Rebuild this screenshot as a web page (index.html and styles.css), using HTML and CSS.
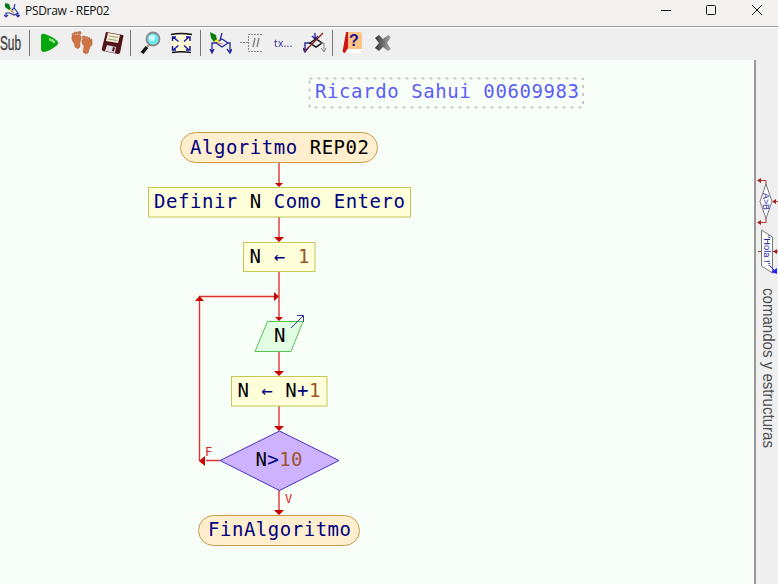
FILE: index.html
```html
<!DOCTYPE html>
<html lang="es">
<head>
<meta charset="utf-8">
<title>PSDraw - REP02</title>
<link rel="stylesheet" href="styles.css">
</head>
<body>
<div class="window">
  <header class="titlebar">
    <svg class="app-icon" width="16" height="16" viewBox="0 0 16 16">
      <path d="M7 8 10 5l4 5-4 2-4-2H2v4M10 5l1-4M14 10v3M0 12l2 2 2-2M12 12l2 2 2-2" fill="none" stroke="#3038a8" stroke-width="1.2"/>
      <path d="M6 7l4 3" stroke="#c44" stroke-width="1"/>
      <path d="M1 0l4 1 2 5-2 1L1 4z" fill="#087818"/><path d="M5 7l2-1 1 3z" fill="#fe0"/>
    </svg>
    <span class="title">PSDraw - REP02</span>
    <div class="controls">
      <svg width="112" height="20" viewBox="0 0 112 20" fill="none" stroke="#111" stroke-width="1">
        <path d="M5 10.500h10"/><rect x="50.500" y="5.500" width="9" height="9" rx="1"/><path d="M96 5l10 10M106 5l-10 10"/>
      </svg>
    </div>
  </header>
  <nav class="toolbar">
    <svg class="sub" width="23" height="30"><text x="0" y="22" textLength="21" lengthAdjust="spacingAndGlyphs">Sub</text></svg>
    <i class="sep"></i>
    <svg class="play" width="20" height="22" viewBox="0 0 20 22"><path d="M1 3Q2 1 5 2q9 3 13 8 1 2-2 4-6 5-12 6-3 0-3-3z" fill="#08a60c"/><path d="M10 7.500q3 1 4 2.500" stroke="#80e878" stroke-width="2.500" fill="none" stroke-linecap="round"/></svg>
    <svg class="feet" width="22" height="24" viewBox="0 0 22 24" fill="#ce7543" stroke="#a9562d" stroke-width=".4"><path d="M1 5q4-3 9 0 1 3-1 6l0 5q-2 3-5 0L3 12Q0 9 1 5z"/><circle cx="1.800" cy="3.500" r=".9"/><circle cx="3.600" cy="2.200" r="1"/><circle cx="5.600" cy="1.700" r="1"/><circle cx="8.500" cy="2" r="1.700"/><path d="M11 9q5-3 10 1 1 4-2 6l-2 6q-3 2-5-1l1-6q-3-3-2-6z"/><circle cx="13" cy="6.500" r="1.700"/><circle cx="16" cy="6.500" r="1"/><circle cx="18.200" cy="7.500" r="1"/><circle cx="20.300" cy="9" r=".9"/></svg>
    <svg class="disk" width="24" height="24" viewBox="0 0 24 24"><path d="M5 1l17 3q1 1 0 3l-3 15q-1 1-2 1L2 20q-2-1-1-3z" fill="#541318"/><path d="M7 2l12 2-2 8-12-2z" fill="#f5f2d5"/><path d="M8 5l9 1.500M7 8l9 1.500" stroke="#9c9a84"/><path d="M6 14l9 2-1 6-10-2z" fill="#dedee2"/><path d="M12 16l2 .5-1 4-2-.5z" fill="#541318"/></svg>
    <i class="sep s2"></i>
    <svg class="lens" width="22" height="24" viewBox="0 0 22 24"><path d="M7 16l-5 6" stroke="#111" stroke-width="3.500"/><path d="M10 13l-3 3" stroke="#999" stroke-width="2"/><circle cx="13" cy="8" r="6.500" fill="#6ce8f5" stroke="#888" stroke-width="1.800"/><circle cx="12" cy="7" r="3" fill="#d0ffff"/></svg>
    <svg class="fit" width="23" height="23" viewBox="0 0 23 23"><path d="M1 3h20v16H1z" fill="#fffbd5"/><path d="M1 2.500q10-2 21 0M2 20.500q9-1.500 19 0" fill="none" stroke="#111" stroke-width="1.500"/><path d="M8.500 9.500L3 5M14 9.500l5-4.500M8.500 13.500L3 18M14 13.500l5 4.500M2.500 9V5H6M16 5h4v4M2.500 14v4H6M16 18h4v-4" fill="none" stroke="#171ba6" stroke-width="1.500"/></svg>
    <i class="sep s3"></i>
    <svg class="style" width="23" height="23" viewBox="0 0 23 23"><path d="M11 8l2-7M3 20v-9h4l6 4 6-4-6-4-6 4M19 11h2v9M1 17l2 4 2-4M18 17l3 4 2-4" fill="none" stroke="#2428a0" stroke-width="1.300"/><path d="M8 11l6 1" stroke="#d77"/><path d="M1 0l6 3 1 5-3 2-3-4z" fill="#07800b"/><path d="M5 9l4-2 1 4z" fill="#fe0"/></svg>
    <svg class="comment" width="23" height="22" viewBox="0 0 23 22" fill="none" stroke="#888"><path d="M0 10.500h8M22 2.500H8.500v17H22" stroke-dasharray="2 1"/><path d="M15 6l-2 9M19 6l-2 9" stroke-width="1.500"/></svg>
    <span class="tx">tx...</span>
    <svg class="croptool" width="24" height="24" viewBox="0 0 24 24"><path d="M12 2v6M9 5l3 3 3-3M2 20v-8h5M0 17l2 4 3-4" fill="none" stroke="#2428a0" stroke-width="1.400"/><path d="M7 12l6-4 6 4-6 4z" fill="none" stroke="#111" stroke-width="1.500"/><path d="M18 12h3v8M18 17l3 4 2-4" fill="none" stroke="#888"/><path d="M1 21L20 2" stroke="#8b2020" stroke-width="1.300"/></svg>
    <i class="sep s4"></i>
    <svg class="help" width="21" height="24" viewBox="0 0 21 24"><path d="M3 1h14q3 0 3 3v14q-2 5-7 4H2q-2-1-1-4z" fill="#fff"/><path d="M5 1h12q3 0 3 3v14L5 18z" fill="#ffc184"/><path d="M4 1l2 0v16l-3 5q-3 0-2-4z" fill="#cf1717"/><text x="7" y="15">?</text></svg>
    <svg class="close" width="19" height="19" viewBox="0 0 19 19"><defs><linearGradient id="g"><stop stop-color="#333"/><stop offset="1" stop-color="#aaa"/></linearGradient></defs><path d="M1 4l4-3 4 4 5-4 3 2-4 6 4 6-3 2-5-4-4 4-4-3 4-5z" fill="url(#g)"/></svg>
  </nav>
  <main class="workspace">
    <svg class="canvas" width="754" height="524" viewBox="0 60 754 524">
      <rect class="note" x="309.500" y="78.500" width="273.500" height="29"/>
      <text class="note-text" x="315" y="98" textLength="264">Ricardo Sahui 00609983</text>
      <g class="flow">
        <path d="M279 162v22M279 217v22M279 272v46M279 352v21M279 406v22M279 490v22M220 460.500h-14M199.500 461V300M199 296.500h75"/>
      </g>
      <g class="heads">
        <path d="M275 183h8l-4 4zM274 237h10l-5 5zM275 317h8l-4 4zM274 371h10l-5 5zM274 426h10l-5 5zM274 510h10l-5 5zM205 456v10l-6-5zM195 301h9l-4.500-5zM274 292v9l5-4.500z"/>
      </g>
      <rect class="terminal" x="180.500" y="132.500" width="197" height="30" rx="15"/>
      <rect class="terminal" x="198.500" y="515.500" width="161" height="30" rx="15"/>
      <rect class="action" x="148.500" y="187.500" width="262" height="29.500"/>
      <rect class="action" x="243.500" y="242.500" width="71.500" height="29"/>
      <rect class="action" x="231.500" y="376.500" width="95.500" height="29.500"/>
      <path class="input" d="M267.500 321.500h35.500l-12 30h-36z"/>
      <path class="out" d="M291 328l12.500-12.500M297 315.500h6.500v6.500"/>
      <path class="decision" d="M220 460.500l59.500-29.500 59.500 29.500-59.500 30z"/>
      <text x="190" y="153.500" textLength="179"><tspan>Algoritmo</tspan><tspan class="k"> REP02</tspan></text>
      <text x="154" y="208" textLength="251">Definir <tspan class="k">N</tspan> Como Entero</text>
      <text x="249.500" y="262.500" textLength="60"><tspan class="k">N</tspan> ← <tspan class="n">1</tspan></text>
      <text class="k" x="274" y="342">N</text>
      <text x="237.500" y="396.500" textLength="83"><tspan class="k">N</tspan> ← <tspan class="k">N</tspan>+<tspan class="n">1</tspan></text>
      <text x="255.500" y="466" textLength="47"><tspan class="k">N</tspan>&gt;<tspan class="n">10</tspan></text>
      <text x="208" y="536" textLength="143">FinAlgoritmo</text>
      <text class="branch" x="205" y="456">F</text>
      <text class="branch" x="285" y="503">V</text>
    </svg>
    <aside class="panel">
      <svg width="22" height="524" viewBox="756 60 22 524">
        <g fill="none" stroke="#b33"><path d="M766 184v-3.500h-6M766 218v4.500h-6M773 201.500h5M758 251.500h4M772 251.500h6"/></g>
        <path d="M757 180.500l4-2.500v5zM757 222.500l4-2.500v5zM772 201.500l4-2.500v5zM773 251.500l4-2.500v5z" fill="#a22020"/>
        <path d="M766 184l6 17.500-6 17-6-17z" fill="#fff" stroke="#777"/>
        <path d="M761.500 230l11 7v36l-11-7z" fill="#fff" stroke="#777"/>
        <g class="mini"><text transform="translate(763 193) rotate(90)" textLength="17" lengthAdjust="spacingAndGlyphs">A&gt;B</text><text transform="translate(764 235) rotate(90)" textLength="31" lengthAdjust="spacingAndGlyphs">"Hola !"</text></g>
        <path d="M770 266l4 4" stroke="#22f"/><path d="M771 272l6-4v6z" fill="#22f"/>
        <text class="side-label" transform="translate(763 288) rotate(90)" textLength="160" lengthAdjust="spacingAndGlyphs">comandos y estructuras</text>
      </svg>
    </aside>
  </main>
</div>
</body>
</html>
```
FILE: styles.css
```css
* { box-sizing: border-box; }
body { margin: 0; background: #efefef; font-family: "Open Sans", sans-serif; }
svg { display: block; flex: none; }
.window { display: flex; flex-direction: column; width: 778px; height: 584px; overflow: hidden; }
.titlebar { display: flex; flex: none; height: 27px; padding-left: 4px; background: #f3f2f0; border-bottom: 1px solid #9b9b9b; }
.app-icon { margin-top: 3px; }
.title { margin-left: 5px; font-size: 12px; line-height: 21px; letter-spacing: -0.3px; color: #111; white-space: nowrap; }
.controls { margin-left: auto; width: 122px; }
.toolbar { display: flex; flex: none; align-items: center; height: 33px; padding-bottom: 2px; border-top: 1px solid #fff; background: #efefef; }
.sub { overflow: visible; }
.sub text { font: 20px "Liberation Sans", sans-serif; fill: #444; stroke: #444; stroke-width: .4px; }
.sep { flex: none; width: 1px; height: 26px; margin-left: 6px; background: #777; }
.play { margin-left: 10px; }
.feet { margin-left: 11px; }
.disk { margin-left: 8px; }
.s2 { margin-left: 5px; }
.lens { margin-left: 9px; }
.fit { margin-left: 8px; }
.s3 { margin-left: 7px; }
.style { margin-left: 8px; }
.comment { margin-left: 8px; }
.tx { width: 20px; margin-left: 11px; font-size: 10px; letter-spacing: .35px; color: #2a2a94; }
.croptool { margin-left: 9px; }
.s4 { margin-left: 5px; }
.help { margin-left: 9px; }
.help text { font: bold 16px "Liberation Sans", sans-serif; fill: #14148c; }
.close { margin-left: 11px; }
.workspace { display: flex; flex: 1; min-height: 0; }
.canvas { background: #f8fff8; }
.canvas text { font-family: "DejaVu Sans Mono", monospace; font-size: 19px; fill: #000080; white-space: pre; }
.canvas .k { fill: #000; }
.canvas .n { fill: #a0522d; }
.canvas .note-text { fill: #5c5cf8; }
.canvas .branch { font-size: 12px; fill: #d22; }
.note { fill: none; stroke: #bbbfb9; stroke-width: 1.6; stroke-dasharray: 3 5; }
.flow path { fill: none; stroke: #d33; stroke-width: 1.4; }
.heads path { fill: #c90000; }
.terminal { fill: #ffefcf; stroke: #c99a4b; }
.action { fill: #ffffd9; stroke: #c6c653; }
.input { fill: #e3ffe3; stroke: #55c055; }
.out { fill: none; stroke: #3434a4; }
.decision { fill: #ccb2ff; stroke: #4a30cc; }
.panel { width: 24px; border-left: 2px solid #999; background: #efefef; }
.mini text { font: 9px "Liberation Sans", sans-serif; fill: #2020a0; }
.side-label { font: 16px "Liberation Sans", sans-serif; fill: #505050; }
```
